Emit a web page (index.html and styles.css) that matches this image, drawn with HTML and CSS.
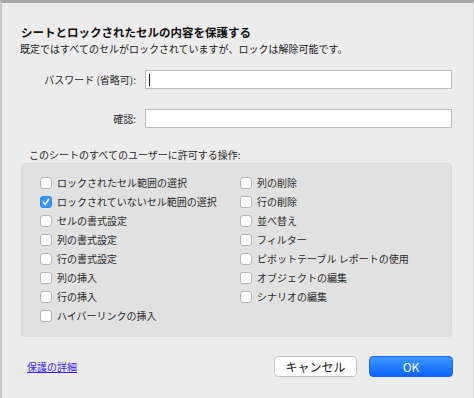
FILE: index.html
```html
<!DOCTYPE html>
<html lang="ja">
<head>
  <meta charset="UTF-8">
  <meta name="viewport" content="width=device-width, initial-scale=1.0">
  <title>シートの保護</title>
  <link rel="stylesheet" href="styles.css">
</head>
<body>
  <div class="sheet-window">
    <div class="dialog">
      <h1 class="dialog-title">シートとロックされたセルの内容を保護する</h1>
      <p class="dialog-desc">既定ではすべてのセルがロックされていますが、ロックは解除可能です。</p>

      <!-- Password fields -->
      <div class="field-grid">
        <label class="field-label" for="password">パスワード (省略可):</label>
        <div class="field-input field-focus" id="password"><span class="caret"></span></div>
        <label class="field-label" for="confirm">確認:</label>
        <div class="field-input" id="confirm"></div>
      </div>

      <!-- Permissions -->
      <p class="group-label">このシートのすべてのユーザーに許可する操作:</p>
      <div class="group-box">
        <div class="check-col">
          <div class="check-row"><span class="box"></span>ロックされたセル範囲の選択</div>
          <div class="check-row"><span class="box checked"><svg viewBox="0 0 12 12" width="12" height="12"><path d="M3.4 6.3 L5.2 8.4 L8.7 3.3" fill="none" stroke="#fff" stroke-width="1.6" stroke-linecap="round" stroke-linejoin="round"/></svg></span>ロックされていないセル範囲の選択</div>
          <div class="check-row"><span class="box"></span>セルの書式設定</div>
          <div class="check-row"><span class="box"></span>列の書式設定</div>
          <div class="check-row"><span class="box"></span>行の書式設定</div>
          <div class="check-row"><span class="box"></span>列の挿入</div>
          <div class="check-row"><span class="box"></span>行の挿入</div>
          <div class="check-row"><span class="box"></span>ハイパーリンクの挿入</div>
        </div>
        <div class="check-col">
          <div class="check-row"><span class="box"></span>列の削除</div>
          <div class="check-row"><span class="box"></span>行の削除</div>
          <div class="check-row"><span class="box"></span>並べ替え</div>
          <div class="check-row"><span class="box"></span>フィルター</div>
          <div class="check-row"><span class="box"></span>ピボットテーブル レポートの使用</div>
          <div class="check-row"><span class="box"></span>オブジェクトの編集</div>
          <div class="check-row"><span class="box"></span>シナリオの編集</div>
        </div>
      </div>

      <!-- Footer -->
      <div class="dialog-footer">
        <a class="help-link" href="#">保護の詳細</a>
        <div class="buttons">
          <button class="btn btn-cancel" type="button">キャンセル</button>
          <button class="btn btn-ok" type="button">OK</button>
        </div>
      </div>
    </div>
  </div>
</body>
</html>
```

FILE: styles.css
```css
body {
  margin: 0;
  padding: 0;
  font-family: "Noto Sans CJK JP", "Noto Sans", sans-serif;
  background: #ececec;
  color: #222;
}

.sheet-window {
  width: 474px;
  height: 398px;
  box-sizing: border-box;
  border-top: 3px solid #a6a6a6;
  border-left: 2px solid #c3cbc3;
  border-right: 1px solid #d4d8d4;
  background: #ececec;
  overflow: hidden;
}

.dialog {
  padding: 0 20px 0 19px;
}

.dialog-title {
  margin: 21px 0 0 0;
  font-size: 11.5px;
  line-height: 16px;
  font-weight: bold;
  color: #111;
}

.dialog-desc {
  margin: 1px 0 0 -1px;
  font-size: 10px;
  line-height: 16px;
  color: #1a1a1a;
}

.field-grid {
  display: grid;
  grid-template-columns: 115px 307px;
  column-gap: 9px;
  row-gap: 20px;
  margin-top: 13px;
  align-items: center;
}

.field-label {
  text-align: right;
  font-size: 10px;
  color: #2a2a2a;
}

.field-input {
  height: 19px;
  box-sizing: border-box;
  background: #fff;
  border: 1px solid #bcbcbc;
  position: relative;
}

.caret {
  position: absolute;
  left: 3px;
  top: 3px;
  width: 1px;
  height: 12px;
  background: #111;
}

.group-label {
  margin: 19px 0 0 8px;
  font-size: 10px;
  line-height: 16px;
  color: #2a2a2a;
}

.group-box {
  margin-top: 0;
  width: 431px;
  height: 174px;
  box-sizing: border-box;
  background: #e1e1e1;
  border: 1px solid #dadada;
  border-radius: 4px;
  padding: 9px 0 0 18px;
  display: grid;
  grid-template-columns: 200px 200px;
}

.check-row {
  display: flex;
  align-items: center;
  height: 19px;
  font-size: 10px;
  color: #2a2a2a;
  white-space: nowrap;
}

.box {
  width: 12px;
  height: 12px;
  box-sizing: border-box;
  background: #fff;
  border: 1px solid #b3b3b3;
  border-radius: 3px;
  margin-right: 5px;
  flex-shrink: 0;
  display: flex;
}

.box.checked {
  background: #3a95fb;
  border-color: #2f86f0;
}

.box svg {
  margin: -1px;
}

.dialog-footer {
  display: flex;
  justify-content: space-between;
  align-items: center;
  margin-top: 19px;
}

.help-link {
  margin-left: 6px;
  font-size: 10px;
  color: #3b1cf5;
  text-decoration: underline;
}

.buttons {
  display: flex;
  gap: 12px;
  margin-right: 0;
}

.btn {
  height: 21px;
  font-family: "Noto Sans CJK JP", "Noto Sans", sans-serif;
  font-size: 12px;
  border-radius: 4px;
  padding: 0;
  line-height: 19px;
}

.btn-cancel {
  width: 83px;
  background: #fff;
  border: 1px solid #c4c4c4;
  color: #222;
}

.btn-ok {
  width: 84px;
  background: linear-gradient(#3c99fd, #0d63fb);
  border: 1px solid #1766f0;
  color: #fff;
}
```
